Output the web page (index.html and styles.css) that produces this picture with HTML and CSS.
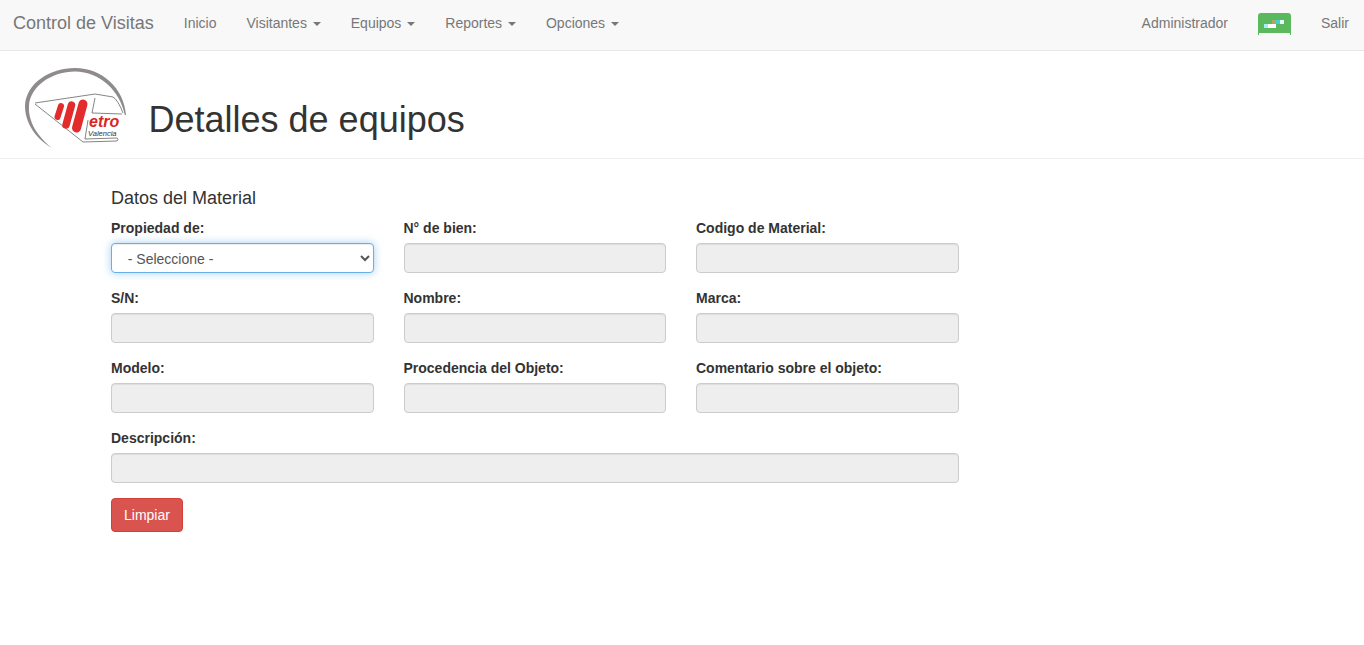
FILE: index.html
```html
<!DOCTYPE html>
<html lang="en">
<head>
    <meta charset="UTF-8">
    <title>Detalles de equipos</title>
    <link rel="stylesheet" href="styles.css">
</head>
<body>
    <nav class="navbar">
        <a class="brand" href="#">Control de Visitas</a>
        <ul class="nav">
            <li><a href="#">Inicio</a></li>
            <li><a href="#">Visitantes <span class="caret"></span></a></li>
            <li><a href="#">Equipos <span class="caret"></span></a></li>
            <li><a href="#">Reportes <span class="caret"></span></a></li>
            <li><a href="#">Opciones <span class="caret"></span></a></li>
        </ul>
        <ul class="nav nav-right">
            <li><a href="#">Administrador</a></li>
            <li>
                <svg class="status-btn" width="33" height="22" viewBox="0 0 33 22" role="img" aria-label="Estado">
                    <path d="M3 0 H30 Q33 0 33 3 V22 H32 V20 H1 V22 H0 V3 Q0 0 3 0 Z" fill="#5cb85c"/>
                    <rect x="6" y="11" width="4" height="4" fill="#a8eef5"/>
                    <rect x="10" y="11" width="8" height="4" fill="#fff"/>
                    <rect x="14" y="7" width="4" height="4" fill="#b0a85c"/>
                    <rect x="18" y="7" width="4" height="4" fill="#40d0d8"/>
                    <rect x="22" y="7" width="4" height="4" fill="#e8fbfb"/>
                </svg>
            </li>
            <li><a href="#">Salir</a></li>
        </ul>
    </nav>

    <header class="page-header">
        <svg class="logo" width="110" height="90" viewBox="20 63 110 90">
            <path d="M52 148 C36 139 25 123 25 106 C26 83 50 68 75 68 C102 68 124 88 126 115 L124.8 115 C120 91 100 71.5 75 71.5 C52 71.5 30 86 29 106 C28 122 38 137 52 148 Z" fill="#8f8b8b"/>
            <path d="M35 103 L95 94 L113 97 Q118 100 123 113 M35 104 L83 142 L117 141 Q119 139 117 138 L85 139 L88 120" fill="none" stroke="#666" stroke-width="0.8"/>
            <path d="M95 98 L92 113 L122 114" fill="none" stroke="#666" stroke-width="0.8"/>
            <path d="M61 106 L57.5 117" stroke="#e32b2b" stroke-width="6" stroke-linecap="round"/>
            <path d="M71.5 105 L66 125" stroke="#e32b2b" stroke-width="7.5" stroke-linecap="round"/>
            <path d="M83 104 L76.5 128" stroke="#e32b2b" stroke-width="9" stroke-linecap="round"/>
            <text class="logo-name" x="89" y="127">etro</text>
            <text class="logo-city" x="88" y="136">Valencia</text>
        </svg>
        <h1>Detalles de equipos</h1>
    </header>

    <main class="content">
        <h4>Datos del Material</h4>
        <form class="form-grid">
            <div class="field">
                <label for="propiedad">Propiedad de:</label>
                <select id="propiedad" class="control is-focus">
                    <option>&nbsp;&nbsp;- Seleccione -</option>
                </select>
            </div>
            <div class="field">
                <label for="bien">N° de bien:</label>
                <input id="bien" class="control" type="text" disabled>
            </div>
            <div class="field">
                <label for="codigo">Codigo de Material:</label>
                <input id="codigo" class="control" type="text" disabled>
            </div>
            <div class="field">
                <label for="sn">S/N:</label>
                <input id="sn" class="control" type="text" disabled>
            </div>
            <div class="field">
                <label for="nombre">Nombre:</label>
                <input id="nombre" class="control" type="text" disabled>
            </div>
            <div class="field">
                <label for="marca">Marca:</label>
                <input id="marca" class="control" type="text" disabled>
            </div>
            <div class="field">
                <label for="modelo">Modelo:</label>
                <input id="modelo" class="control" type="text" disabled>
            </div>
            <div class="field">
                <label for="procedencia">Procedencia del Objeto:</label>
                <input id="procedencia" class="control" type="text" disabled>
            </div>
            <div class="field">
                <label for="comentario">Comentario sobre el objeto:</label>
                <input id="comentario" class="control" type="text" disabled>
            </div>
            <div class="field field-wide">
                <label for="descripcion">Descripción:</label>
                <input id="descripcion" class="control" type="text" disabled>
            </div>
            <div class="actions">
                <button class="btn-danger" type="reset">Limpiar</button>
            </div>
        </form>
    </main>
</body>
</html>
```
FILE: styles.css
```css
* { box-sizing: border-box; }
body {
    margin: 0;
    font-family: "Liberation Sans", Arial, sans-serif;
    font-size: 14px;
    line-height: 20px;
    color: #333;
    background-color: #fff;
}
a { text-decoration: none; }

.navbar {
    display: flex;
    align-items: center;
    height: 51px;
    padding-bottom: 4px;
    background-color: #f8f8f8;
    border-bottom: 1px solid #e7e7e7;
}
.brand {
    padding: 0 15px 0 13px;
    font-size: 18px;
    color: #777;
}
.nav {
    display: flex;
    align-items: center;
    list-style: none;
    margin: 0;
    padding: 0;
}
.nav a {
    display: block;
    padding: 13px 15px;
    color: #777;
}
.nav-right { margin-left: auto; }
.caret {
    display: inline-block;
    width: 0;
    height: 0;
    margin-left: 2px;
    vertical-align: middle;
    border-top: 4px solid #777;
    border-right: 4px solid transparent;
    border-left: 4px solid transparent;
}
.status-btn {
    display: block;
    margin: 2px 15px 0;
}

.page-header {
    display: flex;
    align-items: flex-end;
    height: 108px;
    padding: 12px 0 0 20px;
    border-bottom: 1px solid #eee;
}
.logo { flex: none; margin-bottom: 5px; }
.logo-name {
    font-size: 16px;
    font-weight: bold;
    font-style: italic;
    fill: #d92626;
}
.logo-city {
    font-size: 7.5px;
    font-style: italic;
    fill: #333;
}
.page-header h1 {
    margin: 0 0 18px 18.5px;
    font-size: 36px;
    font-weight: 500;
    line-height: 40px;
}

.content { padding: 29px 0 0 111px; }
.content h4 {
    margin: 0 0 10px;
    font-size: 18px;
    font-weight: 500;
    line-height: 20px;
}
.form-grid {
    display: grid;
    grid-template-columns: repeat(3, 262.5px);
    column-gap: 30px;
    row-gap: 15px;
}
.field label {
    display: block;
    margin-bottom: 5px;
    font-weight: bold;
}
.field-wide { grid-column: 1 / -1; }
.control {
    display: block;
    width: 100%;
    height: 30px;
    padding: 5px 12px;
    font: inherit;
    color: #555;
    background-color: #eee;
    border: 1px solid #ccc;
    border-radius: 4px;
    box-shadow: inset 0 1px 1px rgba(0,0,0,.075);
}
.control.is-focus {
    padding: 1px 0 0 4px;
    background-color: #fff;
    border-color: #66afe9;
    box-shadow: inset 0 1px 1px rgba(0,0,0,.075), 0 0 8px rgba(102,175,233,.6);
}
.actions { grid-column: 1 / -1; }
.btn-danger {
    height: 34px;
    padding: 6px 12px;
    font: inherit;
    color: #fff;
    background-color: #d9534f;
    border: 1px solid #d43f3a;
    border-radius: 4px;
}
```
